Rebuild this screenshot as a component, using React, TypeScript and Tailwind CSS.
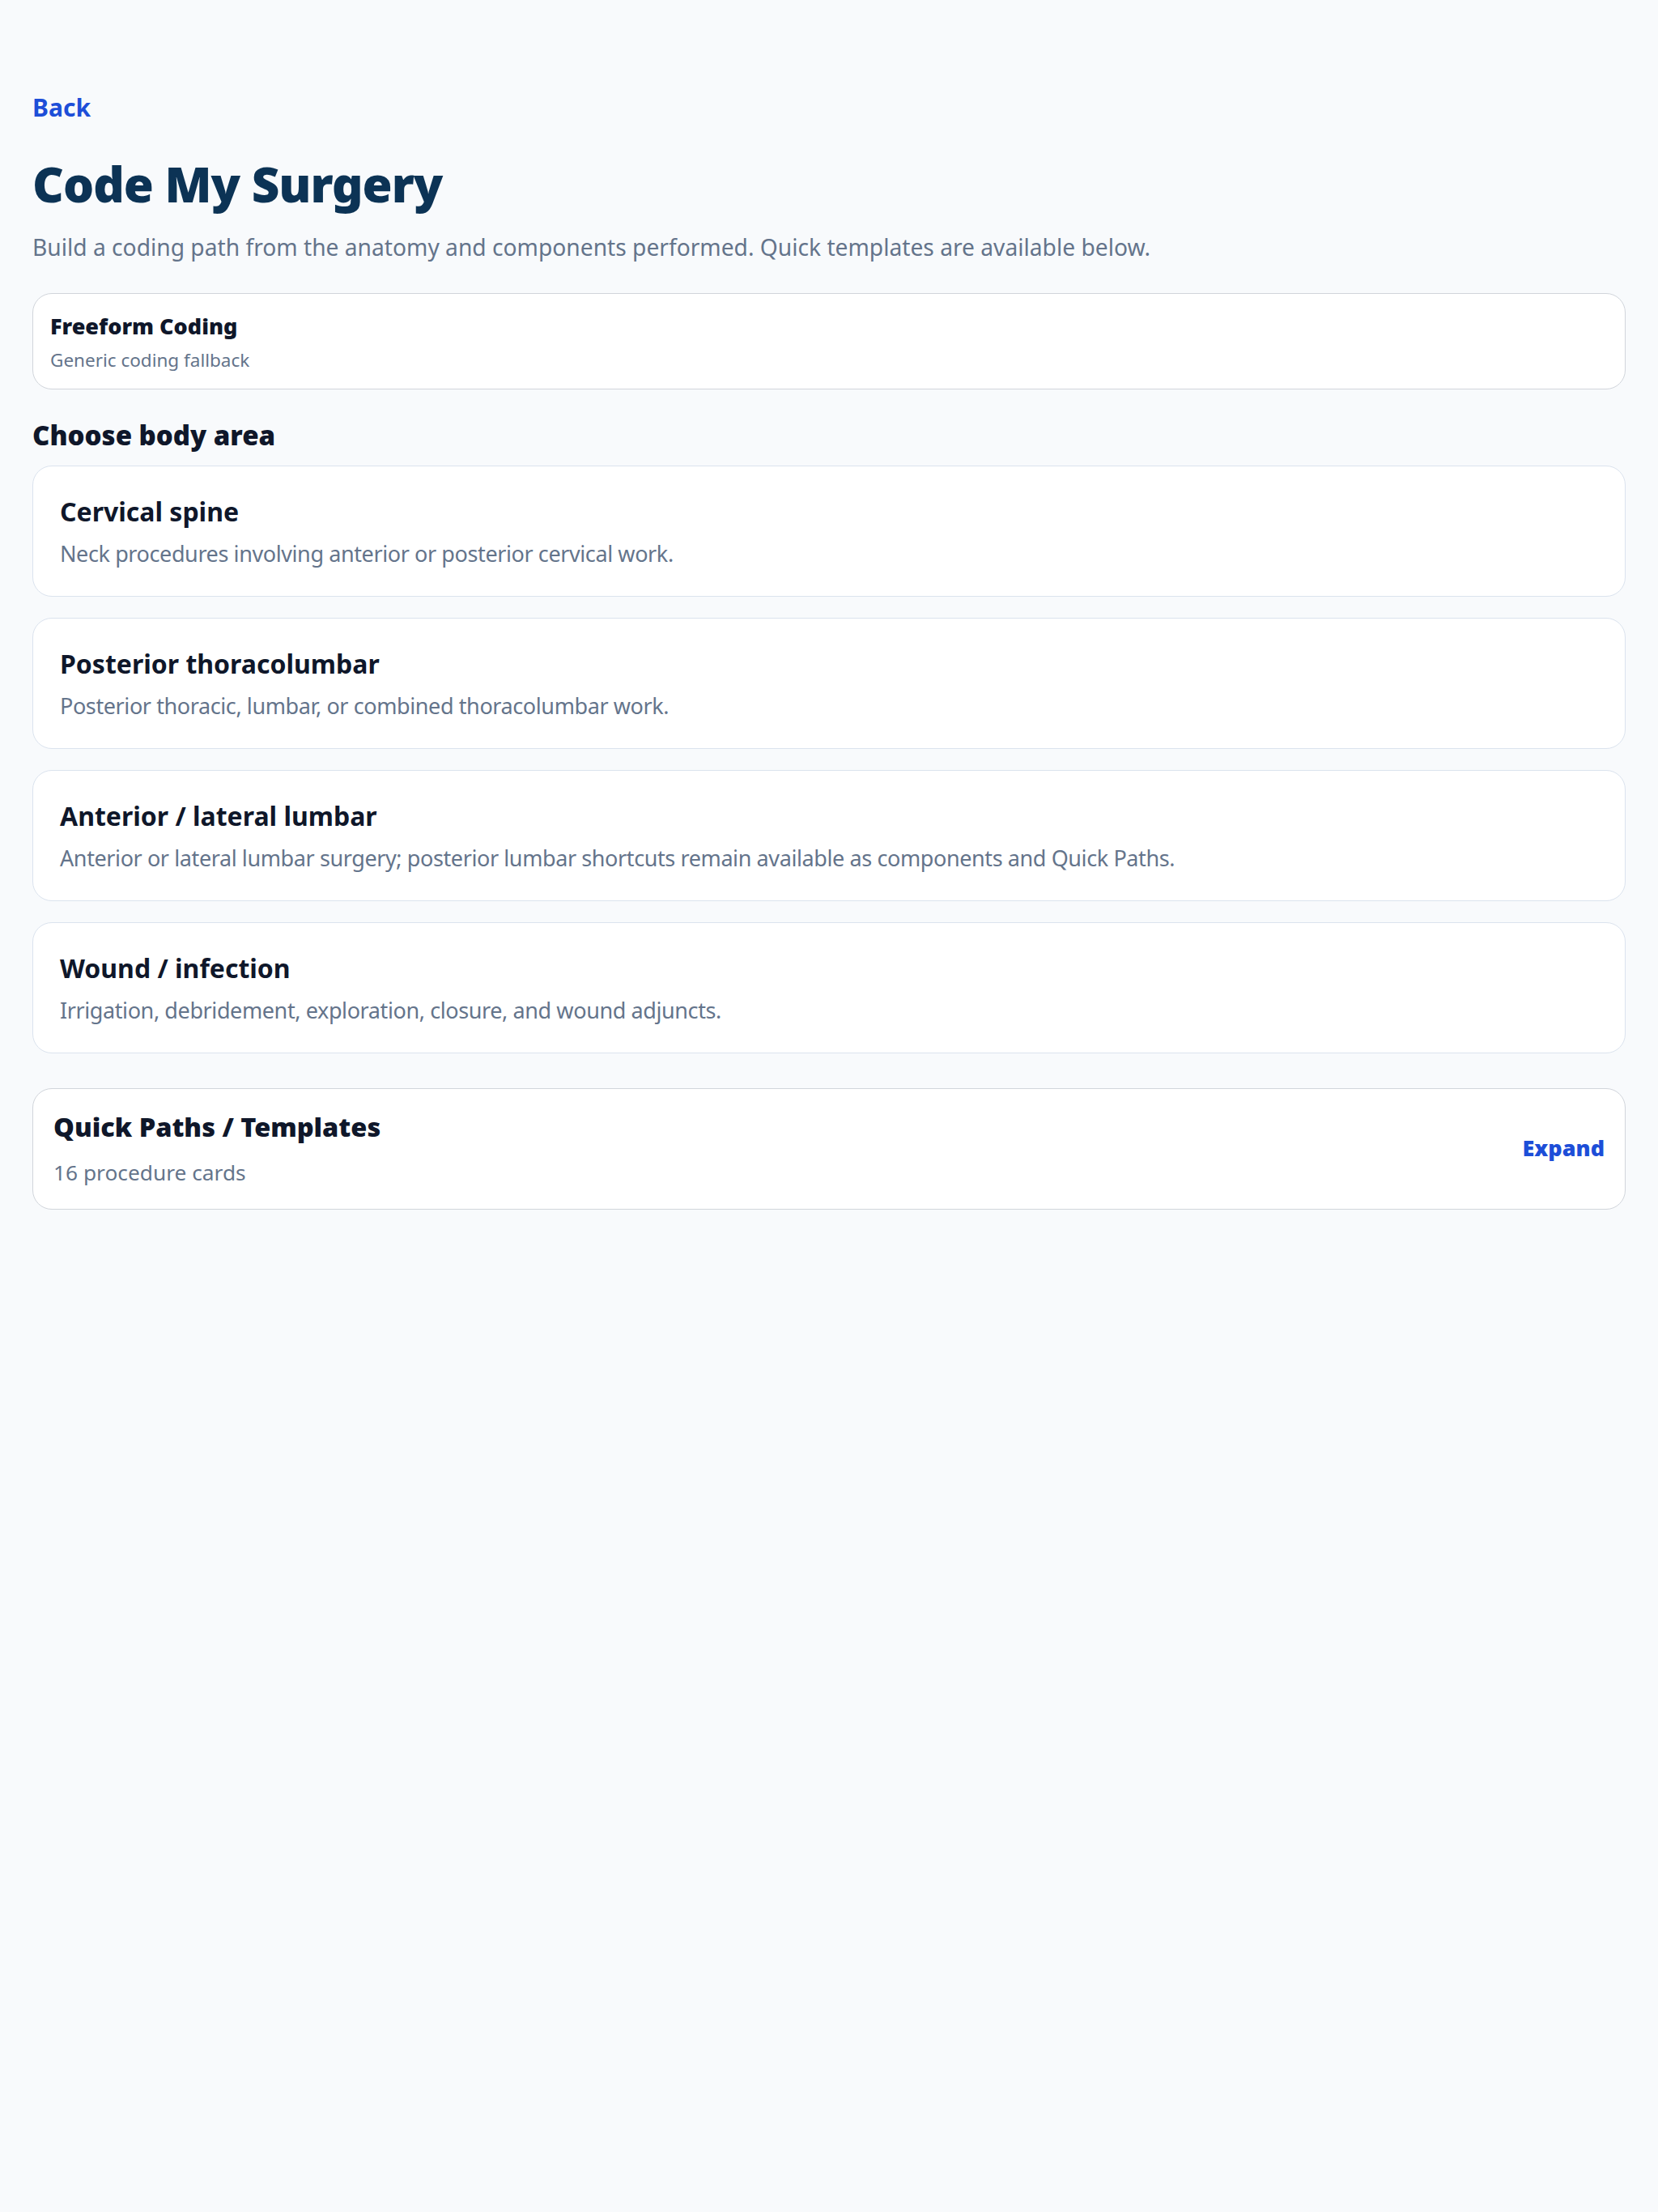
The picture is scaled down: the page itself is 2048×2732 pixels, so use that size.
import { FC } from 'react';

const areas = [
  {
    title: 'Cervical spine',
    desc: 'Neck procedures involving anterior or posterior cervical work.',
  },
  {
    title: 'Posterior thoracolumbar',
    desc: 'Posterior thoracic, lumbar, or combined thoracolumbar work.',
  },
  {
    title: 'Anterior / lateral lumbar',
    desc: 'Anterior or lateral lumbar surgery; posterior lumbar shortcuts remain available as components and Quick Paths.',
  },
  {
    title: 'Wound / infection',
    desc: 'Irrigation, debridement, exploration, closure, and wound adjuncts.',
  },
];

const App: FC = () => {
  return (
    <div className="min-h-[2732px] bg-[#f8fafc] px-[40px] pt-[113px] font-['Noto_Sans',sans-serif]">
      <a className="block text-[30px] leading-[40px] font-bold text-[#1d4ed8] w-fit cursor-pointer">Back</a>

      <h1 className="mt-[36px] text-[60px] leading-[76px] font-black text-[#0c3355] tracking-[-1px]">
        Code My Surgery
      </h1>
      <p className="mt-[22px] text-[28.2px] leading-[36px] text-[#64748b]">
        Build a coding path from the anatomy and components performed. Quick templates are available below.
      </p>

      <div className="mt-[39px] rounded-[24px] border border-[#d1d5db] bg-white px-[21px] pt-[23px] pb-[21px]">
        <h3 className="text-[27px] leading-[34px] font-black text-[#0f172a]">Freeform Coding</h3>
        <p className="mt-[11px] text-[22.5px] leading-[28px] text-[#64748b]">Generic coding fallback</p>
      </div>

      <h2 className="mt-[37px] text-[33px] leading-[40px] font-black text-[#0f172a]">Choose body area</h2>

      <div className="mt-[17px] flex flex-col gap-[26px]">
        {areas.map((a) => (
          <button
            key={a.title}
            className="block w-full text-left rounded-[24px] border border-[#dbe3ee] bg-white px-[33px] pt-[36px] pb-[35px] cursor-pointer"
          >
            <div className="text-[32px] leading-[40px] font-bold text-[#0f172a]">{a.title}</div>
            <div className="mt-[15px] text-[27px] leading-[34px] text-[#64748b] tracking-[-0.4px]">{a.desc}</div>
          </button>
        ))}
      </div>

      <div className="mt-[43px] flex items-center justify-between rounded-[24px] border border-[#d1d5db] bg-white px-[25px] pt-[27px] pb-[29px]">
        <div>
          <div className="text-[32.5px] leading-[40px] font-black text-[#0f172a]">Quick Paths / Templates</div>
          <div className="mt-[20px] text-[26.3px] leading-[32px] text-[#64748b]">16 procedure cards</div>
        </div>
        <button className="text-[27px] leading-[34px] font-black text-[#1d4ed8] cursor-pointer">Expand</button>
      </div>
    </div>
  );
};

export default App;
